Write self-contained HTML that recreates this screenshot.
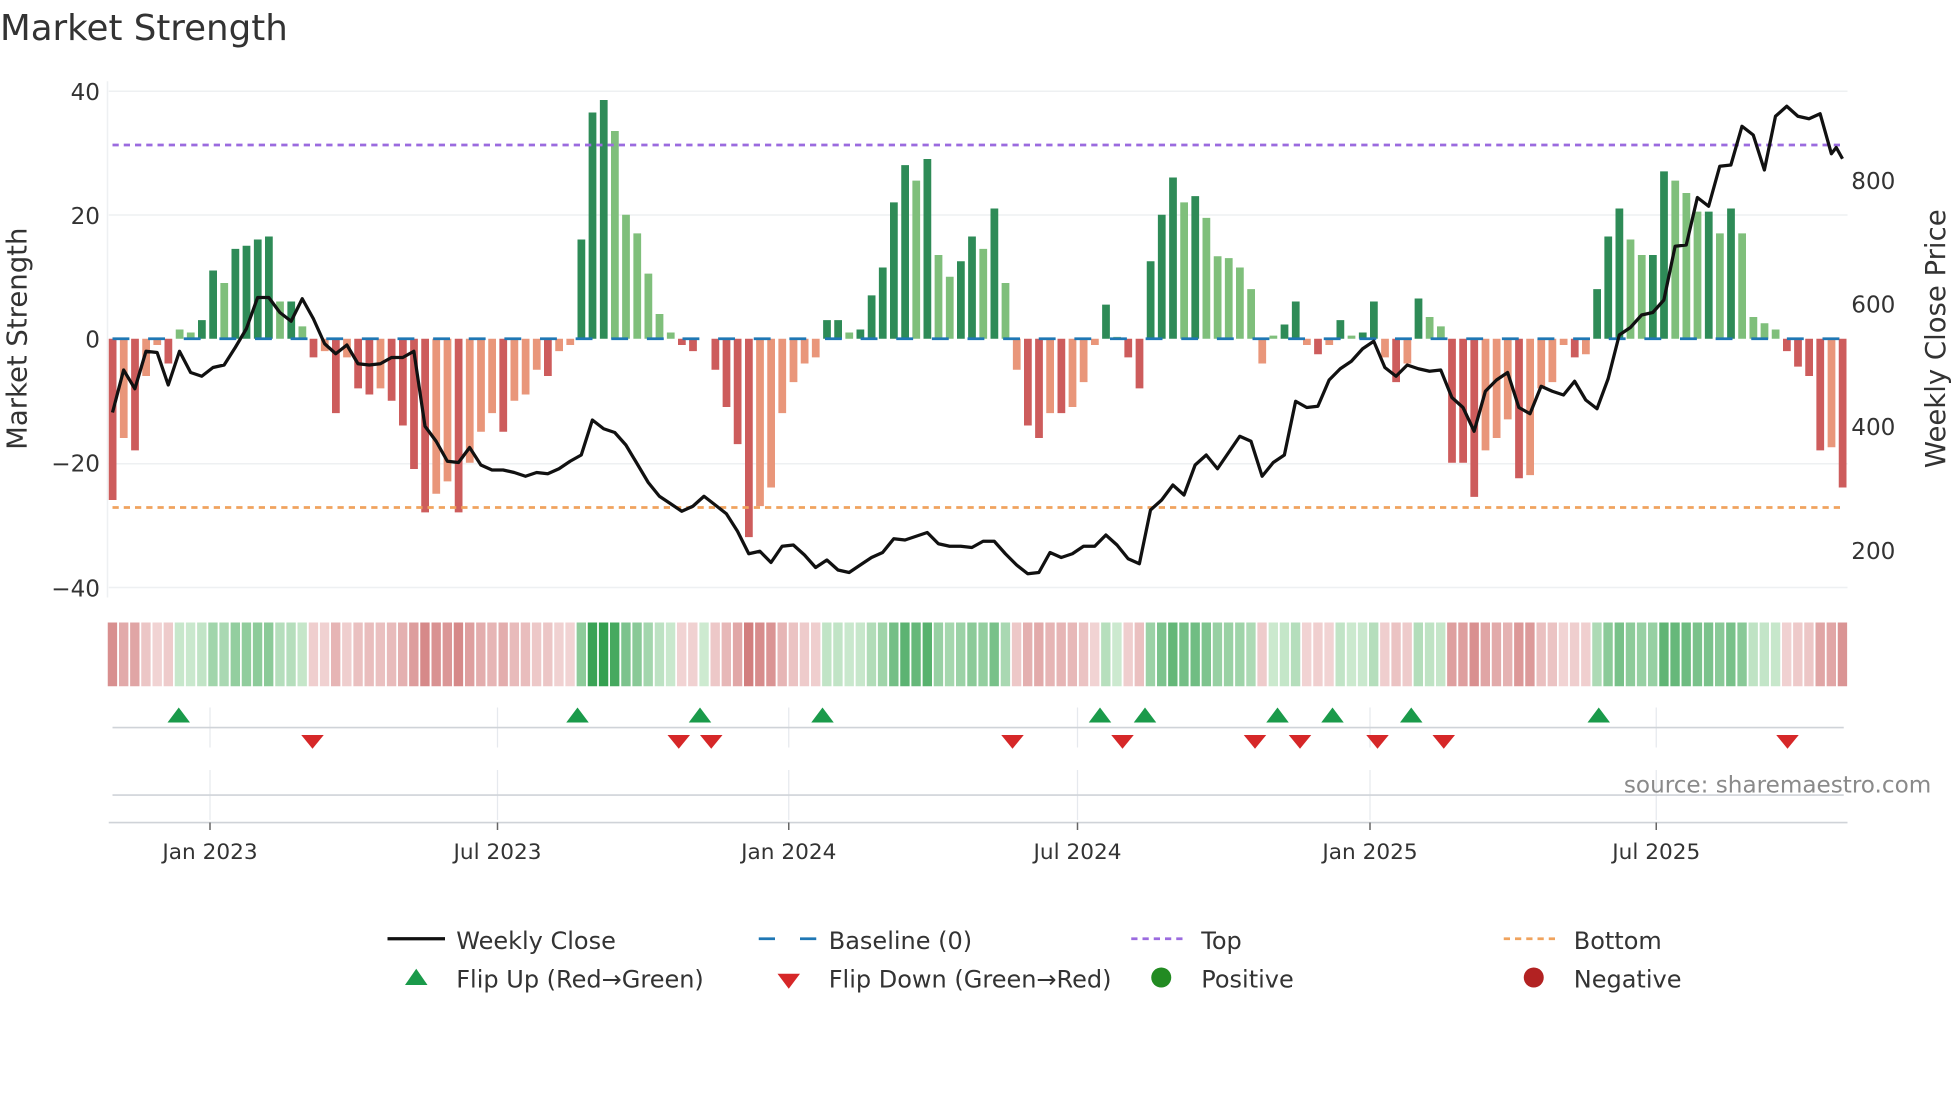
<!DOCTYPE html>
<html><head><meta charset="utf-8"><style>
html,body{margin:0;padding:0;background:#fff;width:1960px;height:1102px;overflow:hidden}
svg{display:block}
text{font-family:"DejaVu Sans","Liberation Sans",sans-serif;fill:#333}
</style></head><body>
<svg id="c" width="1960" height="1102" viewBox="0 0 1568 881.6" preserveAspectRatio="none" xmlns="http://www.w3.org/2000/svg">
<rect width="1568" height="882" fill="#fff"/>
<text x="0" y="32" font-size="28.5">Market Strength</text>
<g stroke="#eef0f2" stroke-width="1.2">
<line x1="87" y1="73" x2="1478" y2="73"/><line x1="87" y1="172" x2="1478" y2="172"/>
<line x1="87" y1="371" x2="1478" y2="371"/><line x1="87" y1="470" x2="1478" y2="470"/>
<line x1="86" y1="65" x2="86" y2="478"/>
</g>
<g font-size="18.5" text-anchor="end">
<text x="80" y="80">40</text><text x="80" y="179">20</text><text x="80" y="278">0</text>
<text x="80" y="377">−20</text><text x="80" y="477">−40</text>
</g>
<g font-size="18.5">
<text x="1481" y="151">800</text><text x="1481" y="250">600</text>
<text x="1481" y="348">400</text><text x="1481" y="447">200</text>
</g>
<text transform="translate(21,271) rotate(-90)" font-size="22" text-anchor="middle">Market Strength</text>
<text transform="translate(1556,271) rotate(-90)" font-size="22" text-anchor="middle">Weekly Close Price</text>
<g id="bars"></g>
<line x1="90" y1="271" x2="1476" y2="271" stroke="#1f77b4" stroke-width="2.2" stroke-dasharray="13.5 15"/>
<line x1="90" y1="116" x2="1476" y2="116" stroke="#9b6bdf" stroke-width="2.2" stroke-dasharray="5 4"/>
<line x1="90" y1="406" x2="1476" y2="406" stroke="#f0a35e" stroke-width="2.2" stroke-dasharray="5 4"/>
<polyline id="price" fill="none" stroke="#111" stroke-width="2.6" stroke-linejoin="round"/>
<g id="heat"></g>
<g stroke="#e6e9ee" stroke-width="1">
<line x1="168" y1="566" x2="168" y2="598"/><line x1="398" y1="566" x2="398" y2="598"/><line x1="631" y1="566" x2="631" y2="598"/><line x1="862" y1="566" x2="862" y2="598"/><line x1="1096" y1="566" x2="1096" y2="598"/><line x1="1325" y1="566" x2="1325" y2="598"/>
<line x1="168" y1="616" x2="168" y2="656"/><line x1="398" y1="616" x2="398" y2="656"/><line x1="631" y1="616" x2="631" y2="656"/><line x1="862" y1="616" x2="862" y2="656"/><line x1="1096" y1="616" x2="1096" y2="656"/><line x1="1325" y1="616" x2="1325" y2="656"/>
</g>
<line x1="90" y1="582" x2="1475" y2="582" stroke="#cfd3d8" stroke-width="1.3"/>
<line x1="90" y1="636" x2="1475" y2="636" stroke="#cfd3d8" stroke-width="1.3"/>
<line x1="87" y1="658" x2="1478" y2="658" stroke="#cfd3d8" stroke-width="1.3"/>
<g id="mk"></g>
<text x="1545" y="634" font-size="18.5" text-anchor="end" style="fill:#8a8a8a">source: sharemaestro.com</text>
<g stroke="#666" stroke-width="1.2">
<line x1="168" y1="658" x2="168" y2="664"/><line x1="398" y1="658" x2="398" y2="664"/><line x1="631" y1="658" x2="631" y2="664"/><line x1="862" y1="658" x2="862" y2="664"/><line x1="1096" y1="658" x2="1096" y2="664"/><line x1="1325" y1="658" x2="1325" y2="664"/>
</g>
<g font-size="17.3" text-anchor="middle">
<text x="168" y="687">Jan 2023</text><text x="398" y="687">Jul 2023</text><text x="631" y="687">Jan 2024</text><text x="862" y="687">Jul 2024</text><text x="1096" y="687">Jan 2025</text><text x="1325" y="687">Jul 2025</text>
</g>
<g font-size="19.2">
<line x1="310" y1="751" x2="356" y2="751" stroke="#111" stroke-width="2.6"/>
<text x="365" y="759">Weekly Close</text>
<line x1="607" y1="751" x2="653" y2="751" stroke="#1f77b4" stroke-width="2.2" stroke-dasharray="13 20"/>
<text x="663" y="759">Baseline (0)</text>
<line x1="905" y1="751" x2="950" y2="751" stroke="#9b6bdf" stroke-width="2.2" stroke-dasharray="5 4"/>
<text x="961" y="759">Top</text>
<line x1="1203" y1="751" x2="1248" y2="751" stroke="#f0a35e" stroke-width="2.2" stroke-dasharray="5 4"/>
<text x="1259" y="759">Bottom</text>
<polygon points="324,788 333,775 342,788" fill="#1a9a4a"/>
<text x="365" y="790">Flip Up (Red→Green)</text>
<polygon points="622,779 640,779 631,791" fill="#d62728"/>
<text x="663" y="790">Flip Down (Green→Red)</text>
<circle cx="929" cy="782" r="8" fill="#228b22"/>
<text x="961" y="790">Positive</text>
<circle cx="1227" cy="782" r="8" fill="#b22222"/>
<text x="1259" y="790">Negative</text>
</g>
</svg>
<script>
var v=[-26,-16,-18,-6,-1,-4,1.5,1,3,11,9,14.5,15,16,16.5,6,6,2,-3,-2,-12,-3,-8,-9,-8,-10,-14,-21,-28,-25,-23,-28,-20,-15,-12,-15,-10,-9,-5,-6,-2,-1,16,36.5,38.5,33.5,20,17,10.5,4,1,-1,-2,0,-5,-11,-17,-32,-27,-24,-12,-7,-4,-3,3,3,1,1.5,7,11.5,22,28,25.5,29,13.5,10,12.5,16.5,14.5,21,9,-5,-14,-16,-12,-12,-11,-7,-1,5.5,0.3,-3,-8,12.5,20,26,22,23,19.5,13.3,13,11.5,8,-4,0.5,2.3,6,-1,-2.5,-1,3,0.5,1,6,-3,-7,-4,6.5,3.5,2,-20,-20,-25.5,-18,-16,-13,-22.5,-22,-8,-7,-1,-3,-2.5,8,16.5,21,16,13.5,13.5,27,25.5,23.5,20.5,20.5,17,21,17,3.5,2.5,1.5,-2,-4.5,-6,-18,-17.5,-24];
var n=v.length,x0=90,x1=1474,dx=(x1-x0)/(n-1),s='',h='';
function mix(a,b,t){var r=[];for(var i=0;i<3;i++)r.push(Math.round(a[i]+(b[i]-a[i])*t));return 'rgb('+r.join(',')+')';}
for(var i=0;i<n;i++){var x=x0+i*dx,val=v[i],p=i?Math.abs(v[i-1]):0,a=Math.abs(val);
var col;if(val>=0)col=a>=p?'#2e8b57':'#7fbf7b';else col=a>=p?'#cd5c5c':'#e9967a';
var y=271-val*4.96;s+='<rect x="'+(x-3).toFixed(1)+'" y="'+Math.min(y,271).toFixed(1)+'" width="6.2" height="'+Math.abs(271-y).toFixed(1)+'" fill="'+col+'"/>';
var t=Math.min(a/38,1);var hc=val>=0?mix([205,234,208],[52,160,80],t):mix([242,214,214],[204,110,110],t);
h+='<rect x="'+(x-dx/2+0.7).toFixed(1)+'" y="498" width="'+(dx-1.4).toFixed(1)+'" height="51" fill="'+hc+'"/>';}
document.getElementById('bars').innerHTML=s;document.getElementById('heat').innerHTML=h;
var py=[330,296,311,281,282,308,281,298,301,294,292,278,263,238,238,250,257,239,255,275,283,276,291,292,291,286,286,281,341,353,369,370,358,372,376,376,378,381,378,379,375,369,364,336,343,346,356,371,386,397,403,409,405,397,404,411,425,443,441,450,437,436,444,454,448,456,458,452,446,442,431,432,429,426,435,437,437,438,433,433,443,452,459,458,442,446,443,437,437,428,436,447,451,408,400,388,396,372,364,375,362,349,353,381,370,364,321,326,325,304,295,289,279,273,294,301,292,295,297,296,318,326,345,313,304,298,326,331,309,313,316,305,320,327,303,268,262,252,250,240,197,196,158,165,133,132,101,108,136,93,85,93,95,91,123,117,127];
var pts=[];for(var i=0;i<py.length;i++){pts.push((x0+Math.min(i,n-1)*dx).toFixed(1)+','+py[i]);}
pts[pts.length-1]=(x1)+','+127;pts[pts.length-2]=(x1-5)+','+118;
document.getElementById('price').setAttribute('points',pts.join(' '));
var up=[143,462,560,658,880,916,1022,1066,1129,1279],dn=[250,543,569,810,898,1004,1040,1102,1155,1430],m='';
up.forEach(function(x){m+='<polygon points="'+(x-9)+',578 '+x+',566 '+(x+9)+',578" fill="#1a9a4a"/>';});
dn.forEach(function(x){m+='<polygon points="'+(x-9)+',588 '+(x+9)+',588 '+x+',599" fill="#d62728"/>';});
document.getElementById('mk').innerHTML=m;
</script>
</body></html>
